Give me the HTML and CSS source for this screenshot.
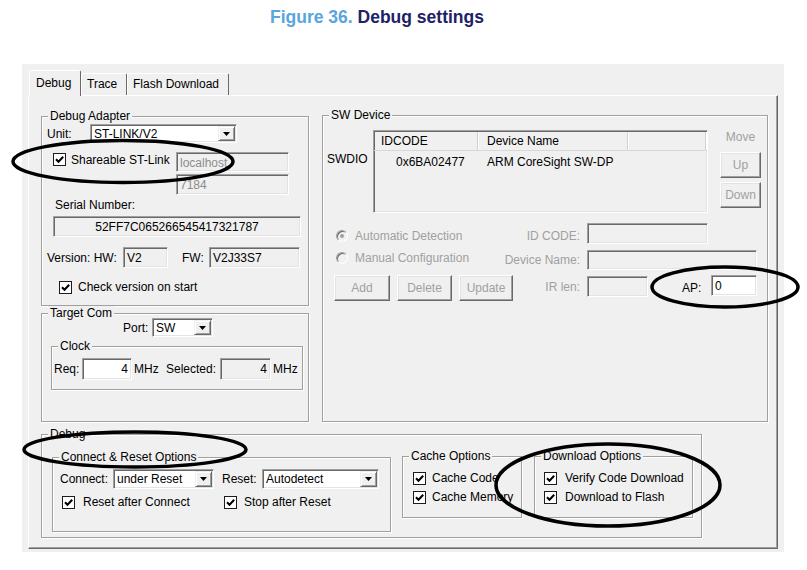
FILE: index.html
```html
<!DOCTYPE html>
<html>
<head>
<meta charset="utf-8">
<title>Debug settings</title>
<link rel="stylesheet" href="styles.css">
</head>
<body>
<h1 class="title"><span class="fig">Figure 36.</span> Debug settings</h1>
<div class="dialog">
  <div class="tabs">
    <div class="tab active t-debug">Debug</div>
    <div class="tab t-trace">Trace</div>
    <div class="tab t-flash">Flash Download</div>
  </div>
  <div class="panel">
    <div class="top">
      <div class="leftcol">
        <div class="group g-adapter">
          <span class="legend">Debug Adapter</span>
          <div class="row r-unit">
            <span class="lbl l-unit">Unit:</span>
            <div class="select s-unit"><span class="val">ST-LINK/V2</span><span class="arrow"><svg width="7" height="4" viewBox="0 0 7 4"><path d="M0 0H7L3.5 4Z"/></svg></span></div>
          </div>
          <div class="row r-share">
            <span class="cb"><svg width="11" height="11" viewBox="0 0 11 11"><path d="M2 5.2l2.5 2.6L9.2 2.8" fill="none" stroke="#000" stroke-width="2"/></svg></span>
            <span class="cbl l-share">Shareable ST-Link</span>
            <div class="field f-host grey">localhost</div>
          </div>
          <div class="row r-portnum"><div class="field f-host2 grey">7184</div></div>
          <div class="r-serlbl">Serial Number:</div>
          <div class="field f-serial">52FF7C065266545417321787</div>
          <div class="row r-ver">
            <span class="lbl l-ver">Version: HW:</span>
            <div class="field f-hw">V2</div>
            <span class="lbl l-fw">FW:</span>
            <div class="field f-fw">V2J33S7</div>
          </div>
          <div class="row r-chk">
            <span class="cb"><svg width="11" height="11" viewBox="0 0 11 11"><path d="M2 5.2l2.5 2.6L9.2 2.8" fill="none" stroke="#000" stroke-width="2"/></svg></span>
            <span class="cbl l-chk">Check version on start</span>
          </div>
        </div>
        <div class="group g-target">
          <span class="legend">Target Com</span>
          <div class="row r-port">
            <span class="lbl l-port">Port:</span>
            <div class="select s-port"><span class="val">SW</span><span class="arrow"><svg width="7" height="4" viewBox="0 0 7 4"><path d="M0 0H7L3.5 4Z"/></svg></span></div>
          </div>
          <div class="group g-clock">
            <span class="legend">Clock</span>
            <div class="row r-clock">
              <span class="lbl l-req">Req:</span>
              <div class="field white f-req">4</div>
              <span class="lbl l-mhz">MHz</span>
              <span class="lbl l-sel">Selected:</span>
              <div class="field f-selv">4</div>
              <span class="lbl l-mhz">MHz</span>
            </div>
          </div>
        </div>
      </div>
      <div class="group g-sw">
        <span class="legend">SW Device</span>
        <div class="sw-top">
          <div class="swdio">SWDIO</div>
          <div class="table">
            <div class="thead"><span class="th c1">IDCODE</span><span class="th c2">Device Name</span><span class="th c3"></span></div>
            <div class="trow"><span class="td c1">0x6BA02477</span><span class="td c2">ARM CoreSight SW-DP</span></div>
          </div>
          <div class="move">
            <div class="move-lbl dis">Move</div>
            <div class="btn b-up">Up</div>
            <div class="btn b-down">Down</div>
          </div>
        </div>
        <div class="sw-bottom">
          <div class="row sw-r1">
            <div class="sw-left l1"><span class="radio on"></span><span class="dis">Automatic Detection</span></div>
            <span class="sw-lbl w103 dis m6">ID CODE:</span>
            <div class="field f-idcode"></div>
          </div>
          <div class="row sw-r2">
            <div class="sw-left l2"><span class="radio"></span><span class="dis">Manual Configuration</span></div>
            <span class="sw-lbl w103 dis m3">Device Name:</span>
            <div class="field f-devname"></div>
          </div>
          <div class="row sw-r3">
            <div class="sw-btns">
              <div class="btn b-add">Add</div>
              <div class="btn b-del">Delete</div>
              <div class="btn b-upd">Update</div>
            </div>
            <span class="sw-lbl w74 dis m5">IR len:</span>
            <div class="field f-irlen"></div>
            <span class="lbl l-ap">AP:</span>
            <div class="field white f-ap">0</div>
          </div>
        </div>
      </div>
    </div>
    <div class="group g-debug">
      <span class="legend">Debug</span>
      <div class="group g-conn">
        <span class="legend">Connect &amp; Reset Options</span>
        <div class="row c-r1">
          <span class="lbl l-conn">Connect:</span>
          <div class="select s-conn"><span class="val">under Reset</span><span class="arrow"><svg width="7" height="4" viewBox="0 0 7 4"><path d="M0 0H7L3.5 4Z"/></svg></span></div>
          <span class="lbl l-reset">Reset:</span>
          <div class="select s-reset"><span class="val">Autodetect</span><span class="arrow"><svg width="7" height="4" viewBox="0 0 7 4"><path d="M0 0H7L3.5 4Z"/></svg></span></div>
        </div>
        <div class="row c-r2">
          <div class="chk w162"><span class="cb"><svg width="11" height="11" viewBox="0 0 11 11"><path d="M2 5.2l2.5 2.6L9.2 2.8" fill="none" stroke="#000" stroke-width="2"/></svg></span><span class="cbl g8">Reset after Connect</span></div>
          <div class="chk"><span class="cb"><svg width="11" height="11" viewBox="0 0 11 11"><path d="M2 5.2l2.5 2.6L9.2 2.8" fill="none" stroke="#000" stroke-width="2"/></svg></span><span class="cbl g7">Stop after Reset</span></div>
        </div>
      </div>
      <div class="group g-cache">
        <span class="legend">Cache Options</span>
        <div class="chk first"><span class="cb"><svg width="11" height="11" viewBox="0 0 11 11"><path d="M2 5.2l2.5 2.6L9.2 2.8" fill="none" stroke="#000" stroke-width="2"/></svg></span><span class="cbl g6">Cache Code</span></div>
        <div class="chk second"><span class="cb"><svg width="11" height="11" viewBox="0 0 11 11"><path d="M2 5.2l2.5 2.6L9.2 2.8" fill="none" stroke="#000" stroke-width="2"/></svg></span><span class="cbl g6">Cache Memory</span></div>
      </div>
      <div class="group g-dl">
        <span class="legend">Download Options</span>
        <div class="chk first"><span class="cb"><svg width="11" height="11" viewBox="0 0 11 11"><path d="M2 5.2l2.5 2.6L9.2 2.8" fill="none" stroke="#000" stroke-width="2"/></svg></span><span class="cbl g8">Verify Code Download</span></div>
        <div class="chk second"><span class="cb"><svg width="11" height="11" viewBox="0 0 11 11"><path d="M2 5.2l2.5 2.6L9.2 2.8" fill="none" stroke="#000" stroke-width="2"/></svg></span><span class="cbl g8">Download to Flash</span></div>
      </div>
    </div>
  </div>
</div>
<svg class="marks" width="807" height="570" viewBox="0 0 807 570">
  <g fill="none" stroke="#000" stroke-width="3.5">
    <ellipse cx="123" cy="161.5" rx="110" ry="21"/>
    <ellipse cx="725" cy="287" rx="73" ry="20"/>
    <ellipse cx="135" cy="449.5" rx="111" ry="17.5"/>
    <ellipse cx="608" cy="485" rx="112" ry="41"/>
  </g>
</svg>
</body>
</html>
```
FILE: styles.css
```css
* { box-sizing: border-box; }
body {
  margin: 0;
  background: #fff;
  font-family: "Liberation Sans", Arial, sans-serif;
  font-size: 12px;
  line-height: 14px;
  letter-spacing: 0;
  color: #000;
  position: relative;
}
.title {
  margin: 0;
  padding: 7px 0 0 270px;
  height: 64px;
  font-size: 17.5px;
  line-height: 20px;
  font-weight: bold;
  letter-spacing: 0;
  color: #1e2266;
}
.title .fig { color: #5aa5dc; }

.dialog {
  margin-left: 22px;
  width: 762px;
  height: 488px;
  background: #f0f0f0;
  padding: 6px 6px 3px 6px;
}
.tabs {
  display: flex;
  align-items: flex-end;
  height: 25px;
  padding-left: 1px;
  position: relative;
  z-index: 1;
}
.tab {
  height: 22px;
  border-top: 1px solid #fff;
  border-left: 1px solid #fff;
  border-right: 1px solid #696969;
  border-radius: 2px 2px 0 0;
  padding: 3px 0 0 5px;
  background: #f0f0f0;
  white-space: nowrap;
}
.tab.active { height: 26px; margin-bottom: -1px; padding: 5px 0 0 6px; }
.t-debug { width: 52px; }
.t-trace { width: 46px; }
.t-flash { width: 102px; }

.panel {
  width: 750px;
  height: 454px;
  border: 1px solid;
  border-color: #fff #696969 #696969 #fff;
  box-shadow: inset -1px -1px 0 #a0a0a0;
  padding: 19px 9px 0 12px;
}
.top { display: flex; height: 307px; }
.leftcol { width: 268px; display: flex; flex-direction: column; }

.group {
  position: relative;
  border: 1px solid #a0a0a0;
  box-shadow: inset 1px 1px 0 #fff, 1px 1px 0 #fff;
}
.legend {
  position: absolute;
  top: -8px;
  left: 6px;
  padding: 0 2px;
  background: #f0f0f0;
  line-height: 14px;
  white-space: nowrap;
}
.row { display: flex; align-items: center; }
.lbl, .cbl { white-space: nowrap; flex: none; }

.field {
  flex: none;
  height: 21px;
  border: 1px solid;
  border-color: #a0a0a0 #fff #fff #a0a0a0;
  box-shadow: inset 1px 1px 0 #696969, inset -1px -1px 0 #e3e3e3;
  background: #f0f0f0;
  padding: 3px 3px 0 3px;
  line-height: 14px;
  white-space: nowrap;
  overflow: hidden;
}
.field.white { background: #fff; }
.field.grey { color: #8c8c8c; }

.select {
  flex: none;
  display: flex;
  height: 19px;
  background: #fff;
  border: 1px solid;
  border-color: #a0a0a0 #fff #fff #a0a0a0;
  box-shadow: inset 1px 1px 0 #696969, inset -1px -1px 0 #e3e3e3;
  padding: 1px;
}
.select .val { flex: 1; padding: 1px 0 0 2px; line-height: 14px; white-space: nowrap; }
.select .arrow {
  width: 17px;
  background: #f0f0f0;
  border: 1px solid;
  border-color: #f0f0f0 #696969 #696969 #f0f0f0;
  box-shadow: inset 1px 1px 0 #fff, inset -1px -1px 0 #a0a0a0;
  display: flex;
  align-items: center;
  justify-content: center;
}

.cb {
  flex: none;
  width: 13px;
  height: 13px;
  border: 1px solid #1c1c1c;
  background: #fff;
  display: flex;
}
.chk { display: flex; align-items: center; height: 14px; }

.btn {
  flex: none;
  height: 26px;
  border: 1px solid;
  border-color: #fff #696969 #696969 #fff;
  box-shadow: inset -1px -1px 0 #a0a0a0, inset 1px 1px 0 #e3e3e3;
  background: #f0f0f0;
  color: #a0a0a0;
  display: flex;
  align-items: center;
  justify-content: center;
}
.dis { color: #a0a0a0; }

.radio {
  flex: none;
  width: 12px;
  height: 12px;
  border-radius: 50%;
  border: 1px solid;
  border-color: #a0a0a0 #fff #fff #a0a0a0;
  box-shadow: inset 1px 1px 0 #696969;
  background: #f0f0f0;
  display: flex;
  align-items: center;
  justify-content: center;
  margin: 0 7px 0 2px;
}
.radio.on::after {
  content: "";
  width: 4px;
  height: 4px;
  border-radius: 50%;
  background: #a0a0a0;
}

/* Debug Adapter */
.g-adapter { margin-top: 1px; height: 190px; }
.r-unit { margin-top: 7px; padding-left: 5px; }
.l-unit { width: 43px; }
.s-unit { width: 147px; }
.r-share { margin-top: 9px; padding-left: 11px; align-items: flex-start; }
.r-share .cb { margin-top: 1px; }
.l-share { margin: 1px 0 0 5px; width: 105px; }
.f-host { width: 113px; height: 20px; }
.f-host2 { width: 113px; height: 21px; }
.r-portnum { margin-top: 2px; padding-left: 134px; }
.r-serlbl { margin-top: 3px; padding-left: 13px; }
.f-serial { margin: 4px 0 0 11px; width: 248px; text-align: center; }
.r-ver { margin-top: 10px; padding-left: 5px; }
.l-ver { width: 76px; }
.f-hw { width: 45px; }
.l-fw { margin-left: 14px; width: 27px; }
.f-fw { width: 91px; }
.r-chk { margin-top: 12px; padding-left: 17px; }
.l-chk { margin-left: 6px; }

/* Target Com */
.g-target { margin-top: 7px; height: 109px; }
.r-port { margin-top: 4px; padding-left: 81px; }
.l-port { width: 29px; }
.s-port { width: 61px; }
.g-clock { margin: 9px 0 0 9px; width: 252px; height: 44px; }
.r-clock { margin-top: 11px; padding-left: 2px; }
.l-req { width: 28px; }
.f-req { width: 50px; height: 22px; text-align: right; padding-top: 3px; }
.f-selv { width: 51px; height: 22px; text-align: right; padding-top: 3px; }
.l-mhz { margin-left: 2px; width: 32px; }
.l-sel { width: 54px; }

/* SW Device */
.g-sw { margin-left: 13px; width: 446px; height: 307px; }
.sw-top { display: flex; margin-top: 14px; }
.swdio { width: 50px; padding-left: 4px; margin-top: 22px; }
.table {
  width: 335px;
  height: 83px;
  border: 1px solid;
  border-color: #a0a0a0 #fff #fff #a0a0a0;
  box-shadow: inset 1px 1px 0 #696969, inset -1px -1px 0 #e3e3e3;
  padding: 1px 0 0 0;
}
.thead { display: flex; height: 19px; border-bottom: 1px solid #d8d8d8; }
.th { line-height: 18px; padding-left: 7px; border-right: 1px solid #d0d0d0; box-shadow: 1px 0 0 #fff; }
.th.c1 { width: 104px; }
.th.c2 { width: 150px; padding-left: 9px; }
.th.c3 { width: 78px; }
.trow { display: flex; padding-top: 4px; }
.td.c1 { width: 104px; padding-left: 22px; }
.td.c2 { padding-left: 9px; white-space: nowrap; }
.move { margin-left: 12px; width: 41px; }
.move-lbl { text-align: center; height: 14px; }
.b-up { margin-top: 8px; }
.b-down { margin-top: 4px; }

.sw-bottom { margin-top: 10px; padding-left: 11px; }
.sw-r1 { height: 21px; align-items: flex-start; }
.sw-r2 { margin-top: 6px; height: 20px; align-items: flex-start; }
.sw-r3 { margin-top: 5px; height: 26px; align-items: flex-start; }
.sw-left { display: flex; align-items: center; width: 150px; height: 14px; white-space: nowrap; }
.l1 { margin-top: 6px; }
.l2 { margin-top: 1px; }
.sw-lbl { text-align: right; padding-right: 7px; white-space: nowrap; flex: none; }
.w103 { width: 103px; }
.w74 { width: 74px; }
.m6 { margin-top: 6px; }
.m3 { margin-top: 3px; }
.m5 { margin-top: 5px; }
.f-idcode { width: 121px; }
.f-devname { width: 170px; height: 20px; }
.sw-btns { display: flex; width: 179px; }
.b-add { width: 56px; }
.b-del { margin-left: 7px; width: 55px; }
.b-upd { margin-left: 7px; width: 54px; }
.f-irlen { margin-top: 1px; width: 61px; }
.l-ap { margin: 6px 0 0 34px; width: 29px; }
.f-ap { width: 46px; }

/* Bottom Debug */
.g-debug { margin-top: 12px; width: 661px; height: 104px; display: flex; align-items: flex-start; }
.g-conn { margin: 22px 0 0 10px; width: 339px; height: 75px; flex: none; }
.c-r1 { margin-top: 11px; padding-left: 7px; }
.l-conn { width: 53px; }
.s-conn { width: 101px; height: 20px; }
.l-reset { margin-left: 8px; width: 40px; }
.s-reset { width: 117px; height: 20px; }
.c-r2 { margin-top: 6px; padding-left: 9px; }
.w162 { width: 162px; }
.g6 { margin-left: 6px; }
.g7 { margin-left: 7px; }
.g8 { margin-left: 8px; }
.g-cache { margin: 21px 0 0 11px; width: 120px; height: 62px; padding-left: 10px; flex: none; }
.g-dl { margin: 21px 0 0 12px; width: 159px; height: 62px; padding-left: 9px; flex: none; }
.chk.first { margin-top: 14px; }
.chk.second { margin-top: 5px; }

.marks { position: absolute; top: 0; left: 0; pointer-events: none; }
```
